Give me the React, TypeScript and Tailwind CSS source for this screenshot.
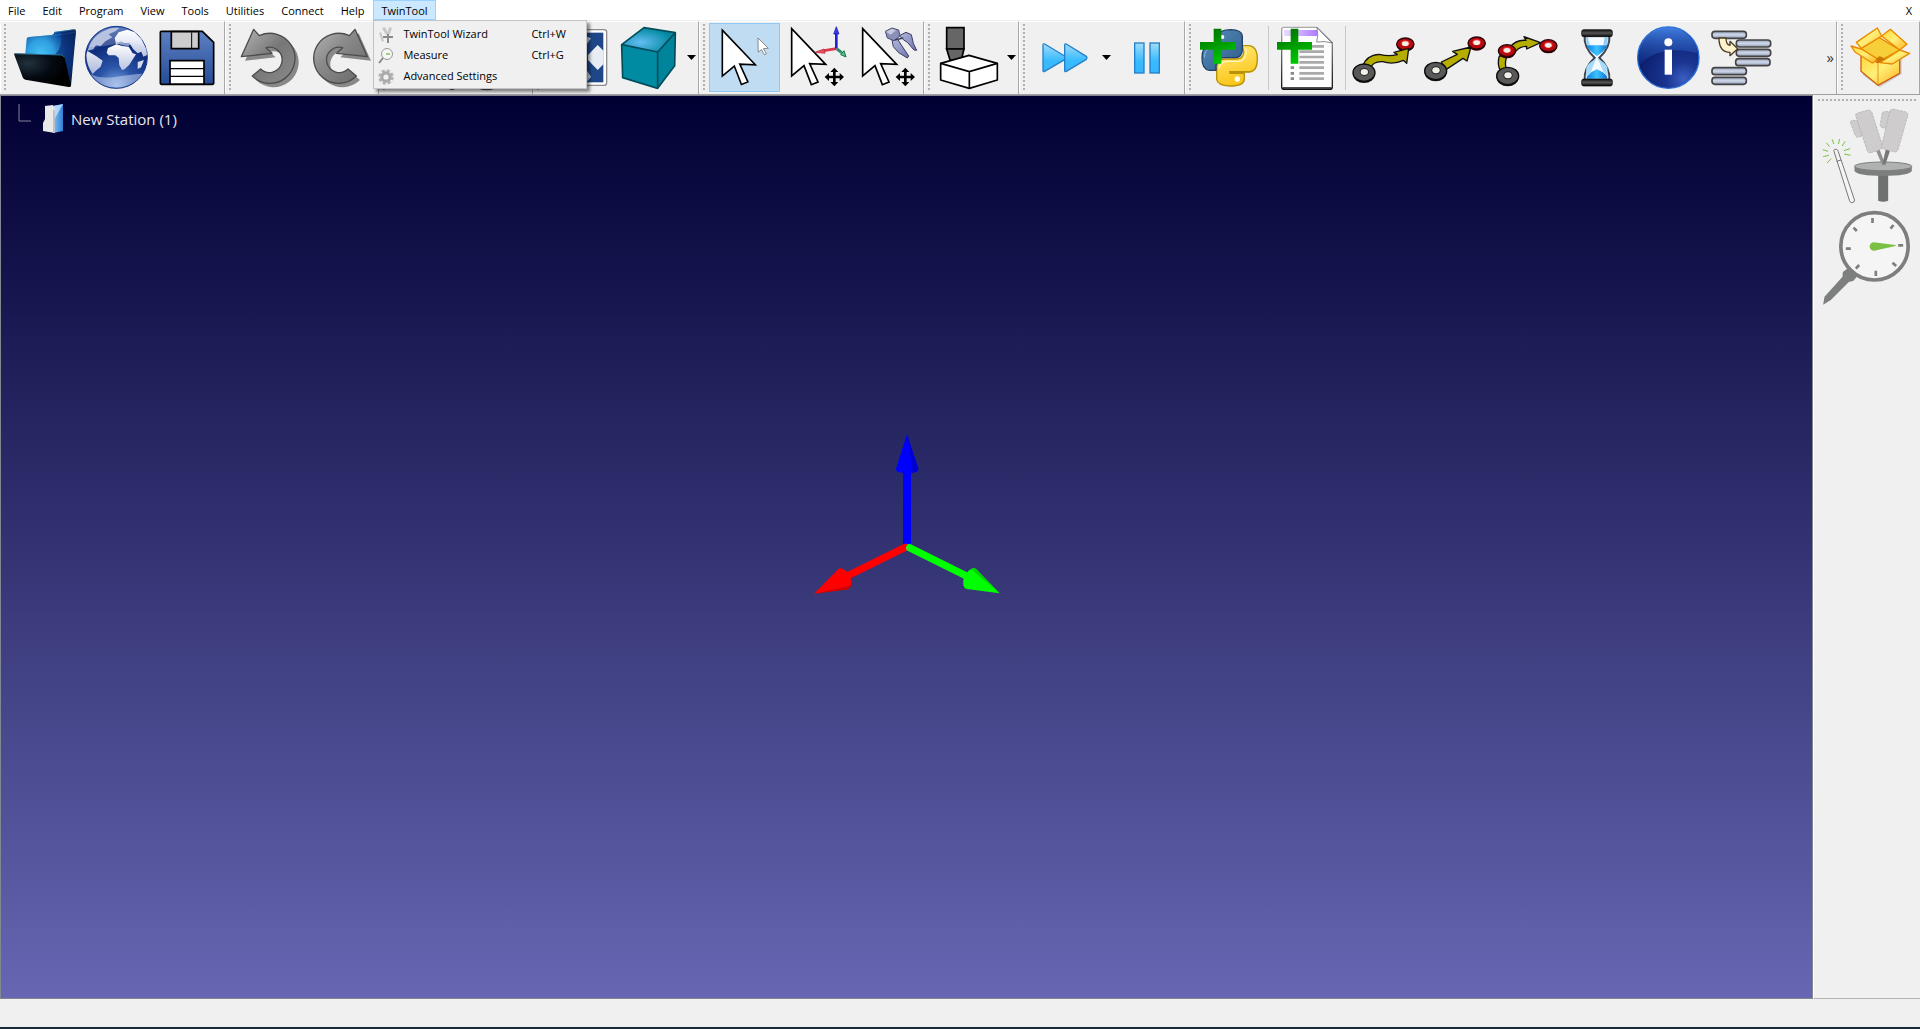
import type { ReactNode } from "react";

interface IChildren {
  children?: ReactNode;
}

interface IIconProps extends IChildren {
  x: number;
}

interface IToolProps extends IChildren {
  label: string;
  active?: boolean;
}

// Toolbar icons share one 213x207 drawing area, shifted by x
const Icon = ({ x, children }: IIconProps) => (
  <svg viewBox={`${x} 69 213 207`} className="h-full w-full" aria-hidden="true">
    {children}
  </svg>
);

const FolderIcon = () => (
  <Icon x={30}>
    <defs>
      <radialGradient id="folderBack" cx="0.3" cy="0.45" r="0.75">
        <stop offset="0" stopColor="#45c3f5" />
        <stop offset="0.35" stopColor="#2f9fe0" />
        <stop offset="0.7" stopColor="#0d3f92" />
        <stop offset="1" stopColor="#061a45" />
      </radialGradient>
      <radialGradient id="folderFront" cx="0.25" cy="0.3" r="0.7">
        <stop offset="0" stopColor="#22323d" />
        <stop offset="0.6" stopColor="#050a12" />
        <stop offset="1" stopColor="#000" />
      </radialGradient>
    </defs>
    <path d="M76 160 L80 116 Q81 111 87 111 L155 105 Q161 103 164 96 L222 88 Q228 88 228 94 L213 258 Z" fill="url(#folderBack)" />
    <path d="M163 97 L226 89 L225 97 L160 106 L86 113" fill="none" stroke="#2b80b5" strokeWidth="2" />
    <path d="M184 98 Q190 140 165 164 L186 164 Q200 200 208 250 L228 92Z" fill="#0a2c70" opacity="0.65" />
    <path d="M44 160 L184 164 Q191 165 194 172 L213 258 Q212 262 206 261 L76 239 Q70 238 68 232 L43 165 Q42 160 44 160Z" fill="url(#folderFront)" />
    <path d="M43 161 L184 165 Q190 166 193 172" fill="none" stroke="#3fa0d8" strokeWidth="2" />
  </Icon>
);

const GlobeIcon = () => (
  <Icon x={243}>
    <defs>
      <radialGradient id="globe" cx="0.5" cy="0.95" r="1">
        <stop offset="0" stopColor="#7fa6e0" />
        <stop offset="0.3" stopColor="#2b54a8" />
        <stop offset="0.65" stopColor="#0f2c7c" />
        <stop offset="1" stopColor="#3a61b5" />
      </radialGradient>
      <linearGradient id="land" x1="0" y1="0" x2="0" y2="1">
        <stop offset="0" stopColor="#fff" />
        <stop offset="1" stopColor="#b9c4e2" />
      </linearGradient>
    </defs>
    <ellipse cx="349" cy="176" rx="91" ry="91" fill="#999" opacity="0.5" />
    <circle cx="349" cy="172" r="93" fill="url(#globe)" stroke="#17398e" strokeWidth="3" />
    <path d="M268 138 Q278 112 305 96 Q335 80 358 84 L346 94 L326 103 L337 112 L316 124 L302 138 L288 136 L280 148 L262 152Z" fill="#a3b1d8" />
    <path d="M262 153 Q275 160 288 168 L308 182 L302 200 L286 214 L278 222 Q259 195 259 165Z" fill="url(#land)" opacity="0.9" />
    <path d="M324 144 L350 133 L366 138 L386 140 L398 160 L408 163 L397 180 L388 194 L374 208 L366 210 L358 196 L356 174 L346 166 L326 166 L320 158Z" fill="url(#land)" />
    <path d="M344 114 L356 97 L382 89 L404 97 L424 117 L439 148 L441 165 L430 170 L424 155 L413 160 L400 148 L392 135 L378 129 L348 132Z" fill="url(#land)" />
    <path d="M347 128 L364 124 L374 130 L389 128 L386 138 L368 136Z" fill="#8c9fcb" />
    <path d="M413 186 L432 180 L423 202 L413 207Z" fill="#d5dcf0" />
    <path d="M264 140 Q290 82 349 82 Q408 82 434 140 Q390 120 349 132 Q305 142 264 140Z" fill="#fff" opacity="0.22" />
    <path d="M272 222 Q300 238 350 230 Q400 222 427 221 Q400 261 349 262 Q300 262 272 222Z" fill="#dfe8fa" opacity="0.45" />
  </Icon>
);

const SaveIcon = () => (
  <Icon x={456}>
    <defs>
      <linearGradient id="floppy" x1="0" y1="0" x2="0" y2="1">
        <stop offset="0" stopColor="#5d80c0" />
        <stop offset="1" stopColor="#254c98" />
      </linearGradient>
    </defs>
    <path d="M484 94 H607 L641 127 V250 Q641 253 638 253 H484 Q481 253 481 250 V97 Q481 94 484 94Z" fill="url(#floppy)" stroke="#000" strokeWidth="5" />
    <path d="M514 95 H596 V146 H514Z" fill="#cdcdcd" stroke="#000" strokeWidth="5" />
    <path d="M575 97 V144" stroke="#000" strokeWidth="3" />
    <path d="M510 182 H612 V252 H510Z" fill="#fff" stroke="#000" strokeWidth="5" />
    <path d="M510 206 H612 M510 229 H612" stroke="#000" strokeWidth="4" />
  </Icon>
);

const turn =
  "M761 88 L778 107 A75 75 0 1 1 757 228 L782 207 A38 38 0 1 0 798 143 L816 160 L724 170 Z";

const UndoIcon = () => (
  <Icon x={705}>
    <defs>
      <linearGradient id="undo" x1="0" y1="0" x2="1" y2="1">
        <stop offset="0" stopColor="#b5b5b5" />
        <stop offset="0.5" stopColor="#777" />
        <stop offset="1" stopColor="#8a8a8a" />
      </linearGradient>
    </defs>
    <path d={turn} fill="#888" transform="translate(11 12)" />
    <path d={turn} fill="url(#undo)" stroke="#4c4c4c" strokeWidth="4" strokeLinejoin="round" />
  </Icon>
);

const RedoIcon = () => (
  <Icon x={918}>
    <defs>
      <linearGradient id="redo" x1="1" y1="0" x2="0" y2="1">
        <stop offset="0" stopColor="#b8b8b8" />
        <stop offset="0.4" stopColor="#8a8a8a" />
        <stop offset="1" stopColor="#666" />
      </linearGradient>
    </defs>
    <path d={turn} fill="#888" transform="translate(1837 12) scale(-1 1)" />
    <path d={turn} fill="url(#redo)" stroke="#4c4c4c" strokeWidth="4" strokeLinejoin="round" transform="translate(1826 0) scale(-1 1)" />
  </Icon>
);

const FrameIcon = () => (
  <Icon x={87}>
    <path d="M190 240 V120 M190 240 L110 255 M190 240 L275 262" stroke="#555" strokeWidth="8" />
    <ellipse cx="276" cy="262" rx="10" ry="8" fill="#444" />
  </Icon>
);

const TargetIcon = () => (
  <Icon x={300}>
    <circle cx="380" cy="208" r="60" fill="none" stroke="#555" strokeWidth="6" />
    <path d="M380 180 V236 M352 208 H408" stroke="#555" strokeWidth="6" />
  </Icon>
);

const FitIcon = () => (
  <Icon x={549}>
    <rect x="562" y="89" width="178" height="167" rx="8" fill="#fff" stroke="#8d8d8d" strokeWidth="4" />
    <rect x="573" y="98" width="157" height="149" fill="#1f4788" />
    <path d="M652 98 L693 115 L681 132 V212 L693 230 L680 247 H620 V98Z" fill="#c5d2e5" />
    <path d="M684 165 L713 135 L731 153 V192 L713 210 L684 180Z" fill="#e8edf5" />
  </Icon>
);

const CubeIcon = () => (
  <Icon x={762}>
    <defs>
      <radialGradient id="cubeTop" cx="0.35" cy="0.6" r="0.6">
        <stop offset="0" stopColor="#63bdf2" />
        <stop offset="1" stopColor="#0089a1" />
      </radialGradient>
    </defs>
    <path d="M785 134 L893 156 V265 L788 233Z" fill="#008ba3" />
    <path d="M893 156 L946 98 L944 197 L893 265Z" fill="#00849c" />
    <path d="M785 134 L852 83 L946 98 L893 156Z" fill="url(#cubeTop)" />
    <path d="M785 134 L852 83 L946 98 L944 197 L893 265 L788 233Z M785 134 L893 156 L946 98 M893 156 V265" fill="none" stroke="#004e5c" strokeWidth="5" strokeLinejoin="round" />
  </Icon>
);

const Cursor = () => (
  <path d="M0 0 L102 107 L54 105 L79 160 L59 168 L37 111 L0 142Z" fill="#fff" stroke="#000" strokeWidth="5" />
);

const MoveArrows = () => (
  <path d="M0 -28 L12 -15 H4 V-4 H16 V-12 L29 0 L16 12 V4 H4 V15 H12 L0 28 L-12 15 H-4 V4 H-16 V12 L-29 0 L-16 -12 V-4 H-4 V-15 H-12Z" fill="#000" />
);

const SelectIcon = () => (
  <Icon x={57}>
    <g transform="translate(95 88)">
      <Cursor />
    </g>
    <path d="M205 112 L237 144 L222 145 L231 161 L225 164 L216 148 L206 156Z" fill="#fff" stroke="#555" strokeWidth="2" />
  </Icon>
);

const MoveFrameIcon = () => (
  <Icon x={270}>
    <g transform="translate(305 86)">
      <Cursor />
    </g>
    <path d="M439 146 L402 152" stroke="#d9384a" strokeWidth="8" />
    <path d="M374 157 L402 147 L405 160Z" fill="#f04a5c" stroke="#b32233" strokeWidth="2" />
    <path d="M439 146 V100" stroke="#2222d8" strokeWidth="8" />
    <path d="M439 80 L447 102 H431Z" fill="#3a3af0" stroke="#1414a0" strokeWidth="2" />
    <path d="M441 147 L455 158" stroke="#2f8f66" strokeWidth="9" />
    <path d="M452 164 L462 152 L468 171Z" fill="#4cc38a" stroke="#22704d" strokeWidth="3" strokeLinejoin="round" />
    <g transform="translate(433 231)">
      <MoveArrows />
    </g>
  </Icon>
);

const MoveToolIcon = () => (
  <Icon x={483}>
    <defs>
      <linearGradient id="claw" x1="0" y1="0" x2="1" y2="1">
        <stop offset="0" stopColor="#b5b9dc" />
        <stop offset="1" stopColor="#6f76b0" />
      </linearGradient>
    </defs>
    <g transform="translate(518 86)">
      <Cursor />
    </g>
    <path d="M628 107 L648 97 L664 104 L670 130 L680 151 L672 150 L652 127 L640 119Z" fill="url(#claw)" stroke="#3a3d60" strokeWidth="3" />
    <path d="M606 120 L622 116 L632 132 L656 168 L652 174 L626 158 L610 140Z" fill="url(#claw)" stroke="#3a3d60" strokeWidth="3" />
    <path d="M586 94 L606 84 L626 90 L630 108 L612 122 L592 114Z" fill="#8a8fb8" stroke="#4a4d70" strokeWidth="3" />
    <path d="M588 95 L606 86 L618 91 L602 104Z" fill="#c6c8de" />
    <path d="M614 120 L640 114" stroke="#3a3d60" strokeWidth="4" />
    <g transform="translate(646 231)">
      <MoveArrows />
    </g>
  </Icon>
);

const MillingIcon = () => (
  <Icon x={732}>
    <path d="M770 83 H822 V147 H770Z" fill="#666" stroke="#000" strokeWidth="5" />
    <path d="M770 147 H822 L814 180 H780Z" fill="#666" stroke="#000" strokeWidth="5" />
    <path d="M752 190 L837 166 L922 190 V240 L838 265 L752 240Z" fill="#fff" stroke="#000" strokeWidth="5" strokeLinejoin="round" />
    <path d="M752 190 L838 215 L922 190 M838 215 V265" fill="none" stroke="#000" strokeWidth="5" />
  </Icon>
);

const BlueGradient = ({ id }: { id: string }) => (
  <defs>
    <linearGradient id={id} x1="0" y1="0" x2="0" y2="1">
      <stop offset="0" stopColor="#a3dcfa" />
      <stop offset="0.6" stopColor="#38bbff" />
      <stop offset="1" stopColor="#38b4fa" />
    </linearGradient>
  </defs>
);

const FastForwardIcon = () => (
  <Icon x={57}>
    <BlueGradient id="forward" />
    <g fill="url(#forward)" stroke="#2680c8" strokeWidth="4" strokeLinejoin="round">
      <path d="M104 132 L164 168 Q170 173 164 179 L104 214 Q99 217 99 211 V136 Q99 130 104 132Z" />
      <path d="M169 132 L229 169 Q233 173 229 178 L169 214 Q164 217 164 211 V136 Q164 130 169 132Z" />
    </g>
  </Icon>
);

const PauseIcon = () => (
  <Icon x={306}>
    <BlueGradient id="pause" />
    <g fill="url(#pause)" stroke="#2680c8" strokeWidth="4">
      <rect x="374" y="129" width="28" height="90" />
      <rect x="420" y="129" width="28" height="90" />
    </g>
  </Icon>
);

const Plus = ({ id }: { id: string }) => (
  <>
    <defs>
      <linearGradient id={id} x1="0" y1="0" x2="0.4" y2="1">
        <stop offset="0" stopColor="#006d00" />
        <stop offset="0.5" stopColor="#009500" />
        <stop offset="1" stopColor="#00c400" />
      </linearGradient>
    </defs>
    <path d="M-12 -52 H11 V-12 H52 V11 H11 V53 H-12 V11 H-53 V-12 H-12Z" fill={`url(#${id})`} />
  </>
);

const PythonIcon = () => (
  <Icon x={555}>
    <defs>
      <linearGradient id="pyBlue" x1="0" y1="0" x2="1" y2="1">
        <stop offset="0" stopColor="#5a8fc0" />
        <stop offset="1" stopColor="#2c5a88" />
      </linearGradient>
      <linearGradient id="pyYellow" x1="0" y1="0" x2="0.3" y2="1">
        <stop offset="0" stopColor="#ffec80" />
        <stop offset="0.5" stopColor="#ffd94a" />
        <stop offset="1" stopColor="#f8c51a" />
      </linearGradient>
    </defs>
    <path d="M697 137 H718 Q742 140 742 177 Q742 214 718 216 H660 V220 H703 V238 Q701 258 660 258 Q622 256 620 238 V202 Q621 180 643 177 H680 Q700 176 701 156Z" fill="url(#pyYellow)" stroke="#b8920a" strokeWidth="4" strokeLinejoin="round" />
    <path d="M657 215 H722" stroke="#b8920a" strokeWidth="4" />
    <path d="M627 205 Q630 186 650 184 H690 Q708 180 709 146" fill="none" stroke="#fff6c0" strokeWidth="4" />
    <path d="M625 108 Q628 89 662 89 Q696 90 697 108 V150 Q696 172 676 173 H642 Q620 174 618 196 V211 H598 Q576 208 576 174 Q576 140 598 137 H660 V130 H625Z" fill="url(#pyBlue)" stroke="#1f4266" strokeWidth="4" strokeLinejoin="round" />
    <path d="M583 172 Q584 150 600 144" fill="none" stroke="#8fb8de" strokeWidth="3" />
    <circle cx="637" cy="111" r="6" fill="#fff" />
    <circle cx="682" cy="237" r="8" fill="#fff" />
    <g transform="translate(623 138)">
      <Plus id="pyPlus" />
    </g>
  </Icon>
);

const NoteIcon = () => (
  <Icon x={786}>
    <defs>
      <linearGradient id="noteHead">
        <stop offset="0" stopColor="#e8dcff" />
        <stop offset="1" stopColor="#b07cff" />
      </linearGradient>
      <linearGradient id="noteEdge" x1="0" y1="0" x2="0" y2="1">
        <stop offset="0" stopColor="#aaa" />
        <stop offset="1" stopColor="#111" />
      </linearGradient>
    </defs>
    <path d="M821 82 H921 L967 128 V260 Q967 268 960 268 H823 Q815 268 815 260 V88 Q815 82 821 82Z" fill="#fdfdfd" stroke="url(#noteEdge)" strokeWidth="4" />
    <path d="M818 264 H964" stroke="#111" strokeWidth="5" />
    <rect x="822" y="90" width="99" height="18" fill="url(#noteHead)" />
    <path d="M921 83 Q926 105 920 126 Q946 122 966 129Z" fill="#fff" stroke="#555" strokeWidth="2" />
    <path d="M868 139 H942 M868 155 H942 M868 171 H942 M868 187 H942 M868 203 H942 M868 220 H942 M868 236 H942" stroke="#aaa" strokeWidth="8" />
    <path d="M842 203 H852 M842 220 H852 M842 236 H852" stroke="#888" strokeWidth="8" />
    <g transform="translate(854 138)">
      <Plus id="notePlus" />
    </g>
  </Icon>
);

interface INodeProps {
  cx: number;
  cy: number;
}

const StartNode = ({ cx, cy }: INodeProps) => (
  <g transform={`translate(${cx} ${cy})`}>
    <ellipse cy="4" rx="33" ry="26" fill="#111" />
    <ellipse cy="-1" rx="33" ry="26" fill="#595959" stroke="#0c0c0c" strokeWidth="4" />
    <ellipse cx="1" cy="-3" rx="14" ry="12" fill="#2b2b2b" />
    <ellipse cx="1" cy="-3" rx="11" ry="9" fill="#f1efe6" />
  </g>
);

const TargetNode = ({ cx, cy }: INodeProps) => (
  <g transform={`translate(${cx} ${cy})`}>
    <ellipse cy="3" rx="26" ry="19" fill="#300" />
    <ellipse cy="-1" rx="26" ry="18" fill="#b5080f" stroke="#28050a" strokeWidth="4" />
    <ellipse cy="-3" rx="13" ry="9" fill="#e33" />
    <ellipse cy="-2" rx="10" ry="7" fill="#f1efe6" />
  </g>
);

const olive = { fill: "#b5ad00", stroke: "#111", strokeWidth: 4, strokeLinejoin: "round" } as const;

const MoveJointIcon = () => (
  <Icon x={27}>
    <TargetNode cx={196} cy={133} />
    <path d="M68 200 Q78 165 118 163 Q146 170 172 164 L162 157 L206 145 L200 190 L190 181 Q160 195 128 185 Q96 184 92 206Z" {...olive} />
    <StartNode cx={72} cy={219} />
  </Icon>
);

const MoveLinearIcon = () => (
  <Icon x={240}>
    <TargetNode cx={410} cy={130} />
    <path d="M304 186 L352 163 L338 154 L393 141 L381 183 L369 175 L318 209Z" {...olive} />
    <StartNode cx={287} cy={214} />
  </Icon>
);

const MoveCircularIcon = () => (
  <Icon x={453}>
    <path d="M478 168 Q470 195 482 212 H500 Q492 190 501 168Z" {...olive} />
    <path d="M510 142 Q528 118 558 121 L552 110 L602 128 L560 147 L560 139 Q540 139 528 153Z" {...olive} />
    <TargetNode cx={501} cy={153} />
    <TargetNode cx={625} cy={138} />
    <StartNode cx={503} cy={229} />
  </Icon>
);

const HourglassIcon = () => (
  <Icon x={666}>
    <defs>
      <linearGradient id="sand" x1="0" y1="0" x2="1" y2="0">
        <stop offset="0" stopColor="#0b7fe0" />
        <stop offset="0.5" stopColor="#3fc3ff" />
        <stop offset="1" stopColor="#0a6fd0" />
      </linearGradient>
      <linearGradient id="cap" x1="0" y1="0" x2="0" y2="1">
        <stop offset="0" stopColor="#111" />
        <stop offset="0.5" stopColor="#555" />
        <stop offset="1" stopColor="#050505" />
      </linearGradient>
    </defs>
    <path d="M734 106 H808 Q812 142 778 173 Q812 204 808 242 H734 Q730 204 764 173 Q730 142 734 106Z" fill="#f4f9ff" stroke="#3c4450" strokeWidth="6" />
    <path d="M740 136 H802 Q796 152 771 168 Q746 152 740 136Z" fill="url(#sand)" />
    <path d="M739 236 Q740 222 771 208 Q802 222 803 236Z" fill="url(#sand)" />
    <path d="M739 202 Q748 186 768 177 L750 222 L738 230Z M802 202 Q794 186 774 177 L792 220 L804 230Z" fill="#a5daf8" />
    <path d="M744 112 Q744 122 750 134 H740 L738 112Z M803 112 L802 134 H790 L794 112Z" fill="#8fcbf2" />
    <rect x="725" y="89" width="92" height="21" rx="6" fill="url(#cap)" stroke="#000" strokeWidth="2" />
    <rect x="725" y="237" width="92" height="21" rx="6" fill="url(#cap)" stroke="#000" strokeWidth="2" />
  </Icon>
);

const InfoIcon = () => (
  <Icon x={39}>
    <defs>
      <radialGradient id="info" cx="0.75" cy="0.85" r="0.95">
        <stop offset="0" stopColor="#3b5fc2" />
        <stop offset="0.3" stopColor="#1a3591" />
        <stop offset="1" stopColor="#04155c" />
      </radialGradient>
      <linearGradient id="infoShine" x1="0" y1="0" x2="0" y2="1">
        <stop offset="0" stopColor="#4f96ff" />
        <stop offset="1" stopColor="#0f318f" stopOpacity="0.5" />
      </linearGradient>
    </defs>
    <circle cx="145" cy="173" r="92" fill="url(#info)" stroke="#2b70d8" strokeWidth="4" />
    <path d="M57 196 A90 90 0 1 1 233 160 Q120 130 57 196Z" fill="url(#infoShine)" opacity="0.8" />
    <circle cx="145" cy="127" r="12" fill="#fff" />
    <rect x="134" y="149" width="22" height="75" fill="#fff" />
  </Icon>
);

const subroutineBars = [
  [276, 94],
  [349, 120],
  [349, 148],
  [347, 176],
  [276, 203],
  [276, 232],
];

const SubroutineIcon = () => (
  <Icon x={252}>
    <defs>
      <linearGradient id="bar" x1="0" y1="0" x2="0" y2="1">
        <stop offset="0" stopColor="#98a5bd" />
        <stop offset="0.5" stopColor="#cfd8ea" />
        <stop offset="1" stopColor="#8f9bb3" />
      </linearGradient>
    </defs>
    {subroutineBars.map(([bx, by]) => (
      <rect key={`${bx}-${by}`} x={bx} y={by} width="103" height="21" rx="9" fill="url(#bar)" stroke="#444" strokeWidth="5" />
    ))}
    <path d="M297 114 H318 Q318 134 330 136 V124 L353 146 L330 167 V157 Q297 157 297 114Z" fill="#fff3cf" stroke="#4a3c22" strokeWidth="4" strokeLinejoin="round" />
  </Icon>
);

const PackageIcon = () => (
  <Icon x={684}>
    <defs>
      <linearGradient id="box" x1="0" y1="0" x2="1" y2="1">
        <stop offset="0" stopColor="#ffd633" />
        <stop offset="0.5" stopColor="#ffef7a" />
        <stop offset="1" stopColor="#ffae1a" />
      </linearGradient>
    </defs>
    <path d="M728 175 L780 198 L848 170 V222 L782 262 L732 226Z" fill="#777" opacity="0.3" />
    <g fill="url(#box)" stroke="#e88a00" strokeWidth="4" strokeLinejoin="round">
      <path d="M726 145 L780 112 L842 150 L778 185Z" fill="#f7cf3a" />
      <path d="M726 160 L776 188 L842 160 V220 L777 256 L726 214Z" stroke="#cf6010" />
      <path d="M712 127 L775 84 L788 108 L727 145Z" />
      <path d="M788 108 L814 88 L864 133 L842 150Z" />
      <path d="M696 138 L727 147 L778 178 L760 189 L708 156Z" />
      <path d="M842 150 L872 160 L820 192 L783 188Z" />
    </g>
    <path d="M770 178 L782 168 L798 176 L780 187Z" fill="#c87a00" />
    <path d="M777 190 V252" stroke="#e89a10" strokeWidth="3" />
  </Icon>
);

const Tool = ({ label, active, children }: IToolProps) => (
  <button
    type="button"
    aria-label={label}
    className={
      active
        ? "h-[69px] w-[71px] shrink-0 border border-[#90c8f6] bg-[#c0dcf3]"
        : "h-[69px] w-[71px] shrink-0"
    }
  >
    {children}
  </button>
);

const DropArrow = ({ label }: { label: string }) => (
  <button type="button" aria-label={label} className="flex h-[69px] w-3 shrink-0 items-center justify-center">
    <svg viewBox="0 0 9 5" className="h-[5px] w-[9px]" aria-hidden="true">
      <path d="M0 0 H9 L4.5 5Z" fill="#000" />
    </svg>
  </button>
);

const Divider = () => <div className="mx-[2px] h-16 w-[2px] shrink-0 self-center border-l border-[#c8c8c8]" />;

const ToolGroup = ({ grow, children }: IChildren & { grow?: boolean }) => (
  <div
    className={`flex items-start border-t border-r border-t-white border-r-[#a8a8a8] pt-px pr-px pb-[2px] ${
      grow ? "flex-1" : "shrink-0"
    }`}
  >
    <div className="h-full w-[10px] shrink-0 border-l border-white py-px pl-[3px]">
      <div className="h-[67px] w-[2px] bg-[repeating-linear-gradient(#b0b0b0_0_2px,transparent_2px_4px)]" />
    </div>
    {children}
  </div>
);

const menus = ["File", "Edit", "Program", "View", "Tools", "Utilities", "Connect", "Help"];

const RobotGlyph = () => (
  <svg viewBox="0 0 16 16" className="h-4 w-4" aria-hidden="true">
    <path d="M4 1 L7 0 L10 6 L8 8Z M11 0 L14 1 L12 7 L9 7Z M1 6 L3 5 L6 14 L4 15Z" fill="#c8c8c8" />
    <path d="M5 10 H15 M10 7 V16" stroke="#8a8a8a" strokeWidth="2" />
  </svg>
);

const GaugeGlyph = () => (
  <svg viewBox="0 0 16 16" className="h-4 w-4" aria-hidden="true">
    <circle cx="9" cy="6" r="5.5" fill="#f5f5f5" stroke="#999" />
    <path d="M5 10 L1 15" stroke="#888" strokeWidth="2" />
    <path d="M8 6 H12" stroke="#8bc45a" strokeWidth="1.5" />
  </svg>
);

const GearGlyph = () => (
  <svg viewBox="0 0 16 16" className="h-4 w-4" aria-hidden="true">
    <circle cx="8" cy="8" r="6.5" fill="none" stroke="#b4b4b4" strokeWidth="2.5" strokeDasharray="3.1 2" />
    <circle cx="8" cy="8" r="4.2" fill="none" stroke="#aaa" strokeWidth="3.2" />
  </svg>
);

const twinToolItems = [
  { label: "TwinTool Wizard", shortcut: "Ctrl+W", icon: <RobotGlyph /> },
  { label: "Measure", shortcut: "Ctrl+G", icon: <GaugeGlyph /> },
  { label: "Advanced Settings", shortcut: "", icon: <GearGlyph /> },
];

const MenuBar = () => (
  <nav className="flex h-5 items-stretch gap-px bg-white">
    {menus.map((menu) => (
      <button key={menu} type="button" className="px-2 pt-[2px]">
        {menu}
      </button>
    ))}
    <div className="relative flex">
      <button type="button" className="border border-[#99d1ff] bg-[#cce8ff] px-[7px] pt-[2px]">
        TwinTool
      </button>
      <div className="absolute top-full left-0 z-10 w-[214px] border border-[#c4c4c4] bg-[#f0f0f0] pt-[3px] pb-px shadow-[3px_3px_3px_rgba(0,0,0,0.45)]">
        {twinToolItems.map(({ label, shortcut, icon }) => (
          <button key={label} type="button" className="flex h-[21px] w-full items-center pl-1 text-left">
            <span className="w-[25px]">{icon}</span>
            <span className="flex-1">{label}</span>
            <span className="w-[55px]">{shortcut}</span>
          </button>
        ))}
      </div>
    </div>
    <button type="button" aria-label="Close" className="ml-auto px-2 pt-[2px]">
      X
    </button>
  </nav>
);

const Toolbar = () => (
  <header className="flex border-t border-b border-t-[#f0f0f0] border-b-[#a0a0a0] bg-[#f0f0f0]">
    <ToolGroup>
      <Tool label="Open"><FolderIcon /></Tool>
      <Tool label="Online library"><GlobeIcon /></Tool>
      <Tool label="Save"><SaveIcon /></Tool>
    </ToolGroup>
    <ToolGroup>
      <Tool label="Undo"><UndoIcon /></Tool>
      <Tool label="Redo"><RedoIcon /></Tool>
    </ToolGroup>
    <ToolGroup>
      <Tool label="Add reference frame"><FrameIcon /></Tool>
      <Tool label="Add target"><TargetIcon /></Tool>
    </ToolGroup>
    <ToolGroup>
      <Tool label="Fit all"><FitIcon /></Tool>
      <Tool label="Isometric view"><CubeIcon /></Tool>
      <DropArrow label="More views" />
    </ToolGroup>
    <ToolGroup>
      <Tool label="Select" active><SelectIcon /></Tool>
      <Tool label="Move reference"><MoveFrameIcon /></Tool>
      <Tool label="Move tool"><MoveToolIcon /></Tool>
    </ToolGroup>
    <ToolGroup>
      <Tool label="Machining"><MillingIcon /></Tool>
      <DropArrow label="More machining" />
    </ToolGroup>
    <ToolGroup>
      <Tool label="Fast simulation"><FastForwardIcon /></Tool>
      <DropArrow label="Simulation speed" />
      <Tool label="Pause"><PauseIcon /></Tool>
    </ToolGroup>
    <ToolGroup grow>
      <Tool label="Add Python program"><PythonIcon /></Tool>
      <Divider />
      <Tool label="Add program"><NoteIcon /></Tool>
      <Divider />
      <Tool label="Move joint"><MoveJointIcon /></Tool>
      <Tool label="Move linear"><MoveLinearIcon /></Tool>
      <Tool label="Move circular"><MoveCircularIcon /></Tool>
      <Tool label="Pause instruction"><HourglassIcon /></Tool>
      <Tool label="Show message"><InfoIcon /></Tool>
      <Tool label="Program call"><SubroutineIcon /></Tool>
      <button type="button" aria-label="More tools" className="ml-auto self-center pr-px text-[15px] text-[#333]">
        »
      </button>
    </ToolGroup>
    <ToolGroup>
      <Tool label="Package"><PackageIcon /></Tool>
    </ToolGroup>
  </header>
);

const StationTree = () => (
  <div className="absolute top-0 left-0 flex items-center pt-2 pl-[17px] text-[15px] text-[#e6e6ee]">
    <svg viewBox="0 0 14 18" className="mb-3 h-[18px] w-[14px]" aria-hidden="true">
      <path d="M1 0 V17 H13" fill="none" stroke="#85859c" />
    </svg>
    <svg viewBox="0 0 20 30" className="ml-[11px] h-[30px] w-5" aria-hidden="true">
      <defs>
        <linearGradient id="station">
          <stop offset="0" stopColor="#8cc8f5" />
          <stop offset="1" stopColor="#2f7fd6" />
        </linearGradient>
      </defs>
      <path d="M9 2 L20 0 V27 L10 29Z" fill="url(#station)" />
      <path d="M11 2 L20 0 L11 16Z" fill="#d4ebff" opacity="0.7" />
      <path d="M2 2 L10 1 L12 6 V29 L0 27 V19 L2 15Z" fill="#e9e9ea" />
      <path d="M10 5 L12 7 V29 L10 28Z" fill="#bcc0c8" />
    </svg>
    <span className="ml-2">New Station (1)</span>
  </div>
);

const Axes = () => (
  <svg viewBox="49 21 600 720" className="h-60 w-[200px]" aria-hidden="true">
    <path d="M349 377 V155" stroke="#00f" strokeWidth="24" />
    <path d="M349 43 L383 146 Q384 152 374 156 Q349 164 324 156 Q314 152 316 146Z" fill="#00f" />
    <path d="M349 43 L383 146 Q384 152 374 156 L366 158Z" fill="#0000d0" />
    <path d="M344 382 L165 470" stroke="#f00" strokeWidth="22" strokeLinecap="round" />
    <path d="M70 521 L144 446 Q152 441 166 452 Q186 476 181 495 Q179 505 172 508Z" fill="#f00" />
    <path d="M70 521 L172 508 Q179 505 181 495 L160 501Z" fill="#d00000" />
    <path d="M357 383 L532 470" stroke="#0f0" strokeWidth="22" strokeLinecap="round" />
    <path d="M627 520 L556 447 Q550 441 536 450 Q514 470 518 495 Q520 505 528 507Z" fill="#0f0" />
    <path d="M627 520 L556 447 Q550 441 542 447 L562 466Z" fill="#00d400" />
    <rect x="347" y="381" width="6" height="10" fill="#9a4" />
  </svg>
);

const WizardIcon = () => (
  <svg viewBox="96 84 272 288" className="h-24 w-[91px]" aria-hidden="true">
    <path d="M264 285 H294 V362 Q279 368 264 362Z" fill="#6f7070" />
    <path d="M193 259 V273 Q200 287 279 288 Q358 287 365 273 V259Z" fill="#7d7f7e" />
    <ellipse cx="279" cy="259" rx="86" ry="13" fill="#b0b1b1" stroke="#7d7f7e" strokeWidth="3" />
    <path d="M258 212 L268 208 L284 250 L277 258Z" fill="#8e9090" />
    <path d="M287 208 L300 211 L285 256 L277 250Z" fill="#767878" />
    <g fill="#cecccd" stroke="#aaa" strokeWidth="2" strokeDasharray="8 3" strokeLinejoin="round">
      <path d="M181 128 Q180 122 188 121 L204 122 L216 168 L203 172 Q197 172 195 166Z" />
      <path d="M276 100 Q279 94 286 94 L302 97 L290 146 L276 143 Q269 140 270 134Z" />
      <path d="M196 106 Q196 101 202 99 L234 90 Q242 90 245 97 L277 196 Q278 205 270 209 L240 219 Q234 219 231 212Z" />
      <path d="M299 93 Q302 87 308 87 L347 96 Q354 98 353 106 L324 208 Q321 216 314 216 L282 208 Q274 206 274 199Z" />
    </g>
    <path d="M131 212 Q132 206 139 208 Q143 209 144 214 L193 360 Q193 368 185 368 Q180 368 178 362Z M139 244 L153 240" fill="#f5f5f5" stroke="#777" strokeWidth="3" />
    <path d="M131 192 L126 178 M145 192 L148 177 M156 198 L165 184 M161 212 L180 206 M162 222 L181 226 M118 200 L109 189 M114 214 L98 209 M116 226 L99 230 M123 236 L111 249" stroke="#7ac143" strokeWidth="3" />
  </svg>
);

const MeasureIcon = () => (
  <svg viewBox="96 390 272 288" className="h-24 w-[91px]" aria-hidden="true">
    <circle cx="253" cy="499" r="101" fill="#f5f5f5" stroke="#7d7f7e" strokeWidth="11" />
    <path d="M175 563 L200 590 L190 602 L176 606 L122 660 L99 674 L103 650 L157 590 L158 576Z" fill="#7d7f7e" />
    <path d="M247 414 V429 M310 435 L301 446 M190 443 L200 453 M167 506 H182 M324 496 H339 M207 555 L197 566 M257 572 V588 M307 548 L318 558" stroke="#7d7f7e" strokeWidth="8" />
    <path d="M250 487 L316 495 V498 L252 512 A12 12 0 0 1 250 487Z" fill="#7ac143" />
  </svg>
);

const App = () => {
  return (
    <div className="flex min-h-screen flex-col border-b-2 border-[#1b2a38] bg-[#f0f0f0] font-['Open_Sans','Noto_Sans',sans-serif] text-[11px] text-black">
      <MenuBar />
      <Toolbar />
      <div className="flex flex-1">
        <main className="relative flex flex-1 items-center justify-center border border-[#828790] bg-linear-to-b/srgb from-[#000033] to-[#6666b3]">
          <StationTree />
          <Axes />
        </main>
        <aside className="flex w-[107px] flex-col items-center border-b border-l border-b-[#b4b4b4] border-l-white pt-1">
          <div className="h-[2px] w-[99px] bg-[repeating-linear-gradient(90deg,#b0b0b0_0_2px,transparent_2px_4px)]" />
          <button type="button" aria-label="TwinTool Wizard" className="mt-[7px]">
            <WizardIcon />
          </button>
          <button type="button" aria-label="Measure" className="mt-[6px]">
            <MeasureIcon />
          </button>
        </aside>
      </div>
      <footer className="h-7" />
    </div>
  );
};

export default App;
